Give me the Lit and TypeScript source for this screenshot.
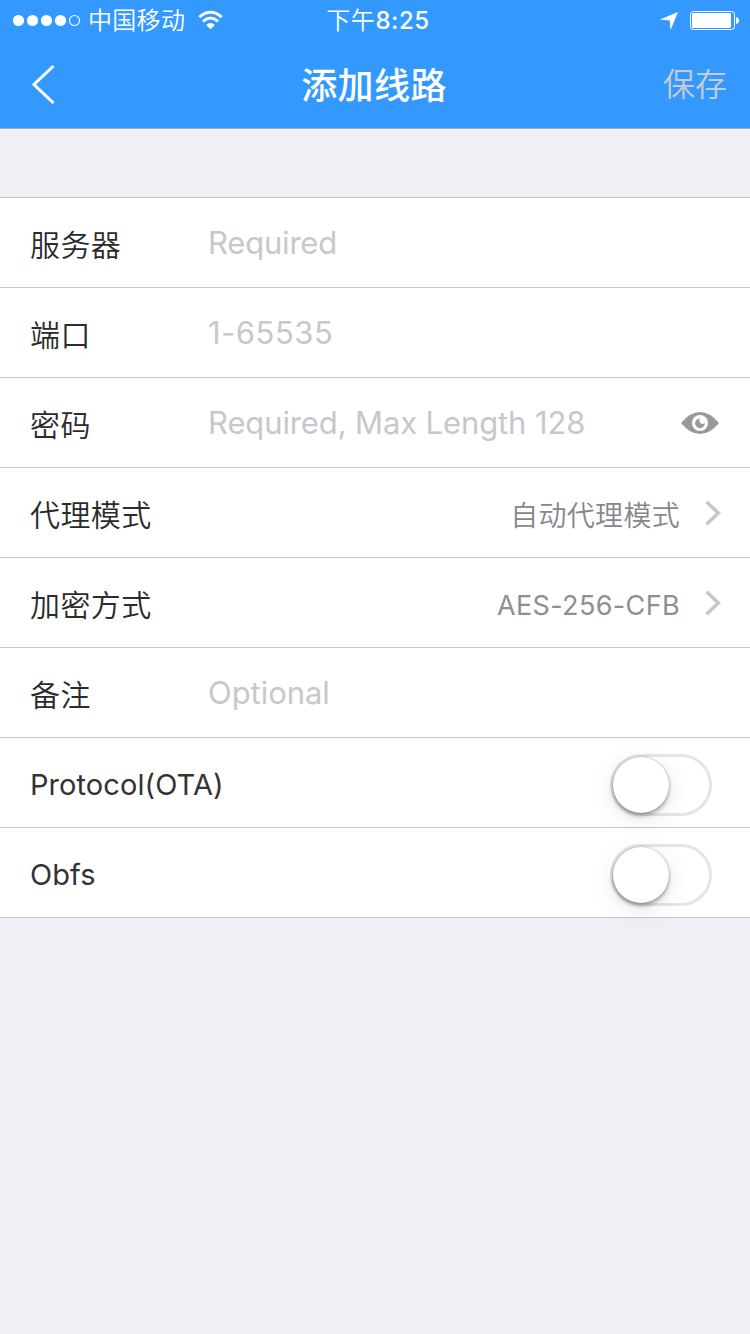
import { LitElement, html, svg, css, nothing } from "lit";
import { customElement, property } from "lit/decorators.js";
import { styleMap } from "lit/directives/style-map.js";

const chevron = svg`<path d="M1.5 1.8 L13.300 13 L1.5 24.2" fill="none" stroke="#c7c7cc" stroke-width="3.6"/>`;

@customElement("status-bar")
class StatusBar extends LitElement {
  static styles = css`
    :host { display: grid; grid-template-columns: 1fr auto 1fr; height: 40px; align-items: center; color: #fff; }
    .left, .right { display: flex; align-items: center; }
    .left { padding-left: 13px; }
    .right { justify-content: flex-end; padding-right: 11px; }
    .dots { margin-right: 8px; }
    .wifi { margin-left: 13px; }
    .arrow { margin-right: 12px; }
    .carrier { font-size: 24px; line-height: 38px; letter-spacing: 0.3px; font-weight: 350; padding-top: 2px; }
    .time { font-size: 24px; line-height: 38px; letter-spacing: 0.6px; font-weight: 500; padding: 2px 0 0 6px; }
    .ampm { font-weight: 350; }
    svg { display: block; }
  `;
  render() {
    return html`
      <div class="left">
        <svg class="dots" width="67" height="40" viewBox="0 0 67 40">
          ${[5.5, 19.5, 33.5, 47.5].map((x) => svg`<circle cx=${x} cy="20.5" r="5.6" fill="#fff"/>`)}
          <circle cx="61.5" cy="20.5" r="5" fill="none" stroke="#fff" stroke-width="1.1"/>
        </svg>
        <span class="carrier">中国移动</span>
        <svg class="wifi" width="25" height="40" viewBox="0 0 25 40">
          <g fill="none" stroke="#fff" stroke-width="3">
            <path d="M1.3 17.1 Q12.5 7.5 23.7 17.1"/>
            <path d="M5 21.3 Q12.5 14.8 20 21.3"/>
          </g>
          <path d="M8.2 25 Q12.5 21.2 16.8 25 L12.5 29.2Z" fill="#fff"/>
        </svg>
      </div>
      <div class="time"><span class="ampm">下午</span>8:25</div>
      <div class="right">
        <svg class="arrow" width="18" height="40" viewBox="0 0 18 40">
          <path d="M18 12 L10.6 30 L9.8 20.400 L0 19.6Z" fill="#fff"/>
        </svg>
        <svg width="49" height="40" viewBox="0 0 49 40">
          <rect x="0.5" y="11.5" width="44" height="18" rx="3" fill="none" stroke="#fff"/>
          <rect x="2" y="13" width="39" height="15" rx="1.5" fill="#fff"/>
          <path d="M46 17 Q49 17.5 49 20.5 Q49 23.500 46 24Z" fill="#fff"/>
        </svg>
      </div>
    `;
  }
}

@customElement("nav-bar")
class NavBar extends LitElement {
  static styles = css`
    :host { display: grid; grid-template-columns: 1fr auto 1fr; height: 88px; align-items: center; color: #fff; }
    .back { display: block; margin-left: 32px; }
    .title { font-size: 36px; line-height: 52px; font-weight: 500; letter-spacing: 0.4px; padding: 4px 2px 0 0; }
    .save { justify-self: end; padding: 2px 23px 0 0; font-size: 32px; line-height: 48px; font-weight: 350; color: #c8cbd0; }
  `;
  render() {
    return html`
      <svg class="back" width="24" height="40" viewBox="0 0 24 40">
        <path d="M21.500 2 L2 20.500 L21.500 39" fill="none" stroke="#fff" stroke-width="3"/>
      </svg>
      <div class="title">添加线路</div>
      <div class="save">保存</div>
    `;
  }
}

@customElement("form-row")
class FormRow extends LitElement {
  @property() label = "";
  @property() hint = "";
  @property() value = "";
  @property({ type: Number }) tracking = 0.3;
  @property({ type: Boolean }) secret = false;
  @property({ type: Boolean }) toggle = false;

  static styles = css`
    :host { display: flex; align-items: center; height: 89px; background: #fff; border-bottom: 1px solid #c8c7cc; padding-left: 30px; }
    .label { width: 178px; flex: none; font-size: 30px; line-height: 44px; letter-spacing: 0.4px; font-weight: 350; color: #2b2b2b; padding-top: 4px; white-space: nowrap; }
    .label.latin { font-size: 29px; letter-spacing: 0.08px; font-weight: 400; color: #333; }
    .hint { flex: 1; font-size: 31px; line-height: 44px; color: #c7c7cc; white-space: nowrap; }
    .value { flex: 1; text-align: right; font-size: 28px; line-height: 44px; font-weight: 350; color: #86868b; padding-top: 6px; }
    .value.latin { font-size: 27px; font-weight: 400; color: #8e8e93; }
    .chevron { display: block; margin: 1px 29px 0 25px; }
    .eye { display: block; margin: 1px 31px 0 0; }
    .switch { box-sizing: border-box; width: 102px; height: 62px; border: 3px solid #e5e5e5; border-radius: 31px; margin: 5px 38px 0 auto; }
    .knob { width: 56px; height: 56px; border-radius: 50%; background: #fff; box-shadow: 0 3px 4px rgba(0,0,0,.3), 0 0 2px rgba(0,0,0,.3), 0 6px 24px rgba(0,0,0,.1); }
  `;
  render() {
    const script = (text: string) => (/^[A-Z]/.test(text) ? "latin" : "");
    const spacing = styleMap({ letterSpacing: `${this.tracking}px` });
    return html`
      <div class="label ${script(this.label)}">${this.label}</div>
      ${this.hint ? html`<div class="hint" style=${spacing}>${this.hint}</div>` : nothing}
      ${this.value
        ? html`<div class="value ${script(this.value)}" style=${spacing}>${this.value}</div>
            <svg class="chevron" width="16" height="26" viewBox="0 0 16 26">${chevron}</svg>`
        : nothing}
      ${this.secret
        ? html`<svg class="eye" width="38" height="22" viewBox="0 0 38 22">
            <path d="M0 11 Q9 0 19 0 Q29 0 38 11 Q29 22 19 22 Q9 22 0 11Z" fill="#999"/>
            <circle cx="19" cy="11" r="8" fill="#fff"/>
            <path d="M18.800 6.400 A4.900 4.900 0 1 0 23.900 11.300 Q21 12.800 19.300 10.900 Q17.700 9 18.800 6.400Z" fill="#999"/>
          </svg>`
        : nothing}
      ${this.toggle ? html`<div class="switch"><div class="knob"></div></div>` : nothing}
    `;
  }
}

@customElement("app-root")
class AppRoot extends LitElement {
  static styles = css`
    :host { display: block; min-height: 1334px; background: #efeff4; font-family: Inter, "Noto Sans CJK SC", sans-serif; }
    .header { background: #3399ff; border-bottom: 1px solid #a9abb0; }
    .form { margin-top: 68px; border-top: 1px solid #c8c7cc; }
  `;
  render() {
    return html`
      <div class="header">
        <status-bar></status-bar>
        <nav-bar></nav-bar>
      </div>
      <div class="form">
        <form-row label="服务器" hint="Required" tracking="-0.2"></form-row>
        <form-row label="端口" hint="1-65535" tracking="0.5"></form-row>
        <form-row label="密码" hint="Required, Max Length 128" tracking="-0.12" secret></form-row>
        <form-row label="代理模式" value="自动代理模式"></form-row>
        <form-row label="加密方式" value="AES-256-CFB" tracking="0.36"></form-row>
        <form-row label="备注" hint="Optional" tracking="-0.05"></form-row>
        <form-row label="Protocol(OTA)" toggle></form-row>
        <form-row label="Obfs" toggle></form-row>
      </div>
    `;
  }
}
